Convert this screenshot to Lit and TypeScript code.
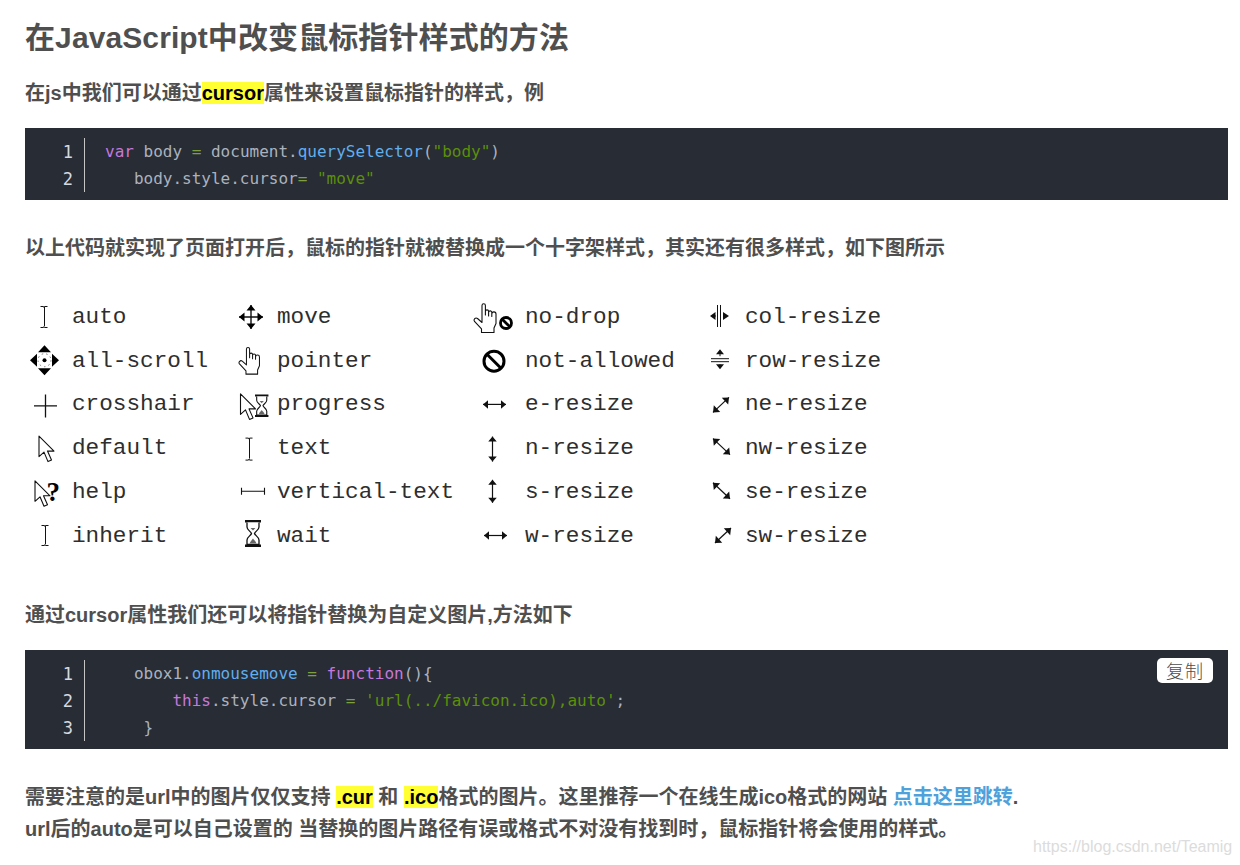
import { LitElement, html, css, svg } from "lit";
import { customElement } from "lit/decorators.js";

const ST = `#111`;
const ibeam = (x: number, a: number, b: number) => svg`<path d="M${x - 3.5} ${a}.5h3l.5 1 .5-1h3M${x}.5 ${a + 1}V${b - 1}M${x - 3.5} ${b}.5h3l.5-1 .5 1h3" fill="none" stroke=${ST} stroke-width="1"/>`;
const arrow = (x: number, y: number, s = 1) => svg`<path transform="translate(${x} ${y}) scale(${s})" d="M.5.5V21L5.5 16.5 9.5 26 13 24.5 9 15.5H15.5Z" fill="#fff" stroke=${ST} stroke-width="1.1" stroke-linejoin="round"/>`;
const hand = (x: number, y: number, s = 1) => svg`<path transform="translate(${x} ${y}) scale(${s})" d="M8 15V2.5A1.7 1.7 0 0 1 11.4 2.5V12V8.5A1.6 1.6 0 0 1 14.6 8.5V13V9.5A1.6 1.6 0 0 1 17.8 9.5V13.5V11A1.6 1.6 0 0 1 22 11V20.5L20 25V29.5H7.500V26L.5 18.5C-1 16.5 1.500 14 3.500 15.500L8 19.500Z" fill="#fff" stroke=${ST} stroke-width="1.1" stroke-linejoin="round"/>`;
const noSign = (cx: number, cy: number, r: number, w: number) => {
  const d = r * 0.7;
  return svg`<circle cx=${cx} cy=${cy} r=${r} fill="#fff" stroke="#000" stroke-width=${w}/><path d="M${cx - d} ${cy - d}L${cx + d} ${cy + d}" stroke="#000" stroke-width=${w}/>`;
};
const glass = (x: number, y: number, s = 1) => svg`<g transform="translate(${x} ${y}) scale(${s})"><path d="M0 0H16V2.500H0ZM0 24.500H16V27H0Z" fill="#111"/><path d="M2 2.500V7C2 10 6 11.500 6.500 13.500C6 15.500 2 17 2 20V24.500H14V20C14 17 10 15.500 9.500 13.500C10 11.500 14 10 14 7V2.500" fill="#fff" stroke="#111" stroke-width="1.300"/><path d="M5.500 8H10.500L8 10.500ZM4.500 23.500C5.500 21 7 20 8 18.500 9 20 10.500 21 11.500 23.500Z" fill="#666"/></g>`;
const dbl = (x1: number, y1: number, x2: number, y2: number, h = 5) => {
  const a = Math.atan2(y2 - y1, x2 - x1), c = Math.cos(a), s = Math.sin(a);
  const head = (x: number, y: number, dx: number, dy: number) =>
    `M${x} ${y}L${x - dx * h + dy * h * .85} ${y - dy * h - dx * h * .85}L${x - dx * h - dy * h * .85} ${y - dy * h + dx * h * .85}Z`;
  return svg`<path d="M${x1} ${y1}L${x2} ${y2}" stroke="#111" stroke-width="1.200"/><path d="${head(x2, y2, c, s)}${head(x1, y1, -c, -s)}" fill="#111"/>`;
};
const tri = (d: string) => svg`<path d=${d} fill="#000"/>`;

interface Cell { name: string; icon: unknown }
const cols: Cell[][] = [
  [
    { name: "auto", icon: ibeam(44, 306, 327) },
    { name: "all-scroll", icon: svg`${tri("M44.5 345L51 352H38ZM44.5 375L51 368H38ZM30 360L37 353.500V366.500ZM59 360L52 353.500V366.500Z")}<circle cx="44.500" cy="360" r="2" fill="#000"/><circle cx="44.500" cy="360" r="6.500" fill="none" stroke="#777" stroke-dasharray="1.500 3"/>` },
    { name: "crosshair", icon: svg`<path d="M34 405.500H57M45.500 394V417" stroke=${ST} stroke-width="1.300"/>` },
    { name: "default", icon: arrow(38.5, 436) },
    { name: "help", icon: svg`${arrow(34.5, 480.500)}<text x="46.500" y="501" class="q">?</text>` },
    { name: "inherit", icon: ibeam(45, 525, 545) },
  ],
  [
    { name: "move", icon: svg`<path d="M239 317H263M251 305V329" stroke="#111" stroke-width="1.400"/>${tri("M251 305L255.500 310.500H246.500ZM251 329L255.500 323.500H246.500ZM239 317L244.500 312.500V321.500ZM263 317L257.500 312.500V321.500Z")}` },
    { name: "pointer", icon: hand(239, 346.500, .93) },
    { name: "progress", icon: svg`${arrow(240, 393)}${glass(255, 394, .84)}` },
    { name: "text", icon: ibeam(249, 438, 460) },
    { name: "vertical-text", icon: svg`<path d="M241.500 488V495M264.500 488V495M241.500 491.500H264.500" stroke=${ST} stroke-width="1.100" fill="none"/>` },
    { name: "wait", icon: glass(245, 520) },
  ],
  [
    { name: "no-drop", icon: svg`${hand(474, 303)}${noSign(506, 323, 5.500, 2.800)}` },
    { name: "not-allowed", icon: noSign(494, 361, 10, 3) },
    { name: "e-resize", icon: dbl(483, 404, 506, 404) },
    { name: "n-resize", icon: dbl(492.500, 437, 492.500, 462) },
    { name: "s-resize", icon: dbl(492.500, 480, 492.500, 503) },
    { name: "w-resize", icon: dbl(484, 535.500, 507, 535.500) },
  ],
  [
    { name: "col-resize", icon: svg`<path d="M717.500 305V327M720.500 305V327" stroke="#111"/><path d="M710 316L715.500 312V320ZM729 316L723 312V320Z" fill="#111"/><path d="M712 316H716M723 316H727" stroke="#111"/>` },
    { name: "row-resize", icon: svg`<path d="M711 358.500H729M711 361.500H729M720 351V356M720 364V367" stroke="#111"/><path d="M720 349L724 354H716ZM720 369L724 364H716Z" fill="#111"/>` },
    { name: "ne-resize", icon: dbl(713, 412, 729, 397, 5.500) },
    { name: "nw-resize", icon: dbl(713, 439, 730, 455, 5.500) },
    { name: "se-resize", icon: dbl(713, 483, 730, 499, 5.500) },
    { name: "sw-resize", icon: dbl(715, 543, 731, 528, 5.500) },
  ],
];
const colX = [25, 232, 460, 705];
const iconW = [47, 45, 65, 40];
const TOP = 294, ROW = 43.8;

@customElement("app-root")
export class AppRoot extends LitElement {
  static styles = css`
    :host { display: block; position: relative; height: 865px; overflow: hidden; background: #fff; padding: 0 12px 0 25px; box-sizing: border-box;
      font-family: "Liberation Sans", "Noto Sans CJK SC", sans-serif; color: #4f4f4f; }
    h1 { margin: 17px 0 0; font-size: 30px; line-height: 42px; font-weight: 700; letter-spacing: .1px; }
    p { margin: 0; font-size: 20px; line-height: 32px; font-weight: 700; }
    .p1 { margin-top: 18px; }
    .p2 { margin-top: 32px; }
    .p3 { margin-top: 42px; }
    .p4 { margin-top: 32px; }
    mark { background: #ffff33; color: #000; }
    a { color: #4ea1db; text-decoration: none; }
    .code { position: relative; margin-top: 19px; background: #282c34; padding: 10px 0 8px; display: flex;
      font-family: "DejaVu Sans Mono", "Liberation Mono", monospace; font-size: 16px; line-height: 27px; color: #abb2bf; }
    .nums { width: 48px; padding-right: 11px; margin-right: 20px; text-align: right; border-right: 1px solid #c5c5c5; color: #d5d9e0; font-size: 17px; line-height: 27px; }
    .ln { height: 27px; padding-top: 1px; box-sizing: border-box; }
    .line { height: 27px; white-space: pre; }
    .k { color: #c678dd; } .f { color: #61aeee; } .s { color: #5c8f0a; } .o { color: #7f9f3f; }
    .copy { position: absolute; top: 8px; right: 15px; width: 56px; height: 25px; background: #fff; border-radius: 5px; display: flex; align-items: center; justify-content: center;
      font-family: "Noto Sans CJK SC", sans-serif; font-size: 18px; font-weight: 300; color: #4d4d4d; line-height: 25px; letter-spacing: 1px; }
    .grid { margin-top: 30px; height: 262.8px; display: grid; grid-template-columns: 207px 228px 245px 1fr; grid-auto-flow: column; grid-template-rows: repeat(6, 43.8px); }
    .cell { display: flex; align-items: center; }
    .cell svg { flex: none; height: 43.8px; overflow: visible; }
    .cell span { font-family: "Liberation Mono", "DejaVu Sans Mono", monospace; font-size: 22.7px; color: #2e2e2e; white-space: pre; padding-top: 2px; }
    .q { font-family: "Liberation Serif", serif; font-weight: 700; font-size: 27px; fill: #000; }
    .mark { position: absolute; left: 1033px; top: 837px; font-size: 16px; line-height: 20px; color: #dcdcdc; white-space: nowrap; }
  `;

  private grid() {
    return cols.flatMap((col, c) =>
      col.map((cell, r) => html`<div class="cell">
        <svg width=${iconW[c]} height=${ROW} viewBox="${colX[c]} ${TOP + r * ROW} ${iconW[c]} ${ROW}">${cell.icon}</svg>
        <span>${cell.name}</span>
      </div>`));
  }

  render() {
    return html`
      <h1>在JavaScript中改变鼠标指针样式的方法</h1>
      <p class="p1">在js中我们可以通过<mark>cursor</mark>属性来设置鼠标指针的样式，例</p>
      <div class="code">
        <div class="nums"><div class="ln">1</div><div class="ln">2</div></div>
        <div class="lines">
          <div class="line"><span class="k">var</span> body <span class="o">=</span> document.<span class="f">querySelector</span>(<span class="s">"body"</span>)</div>
          <div class="line">   body.style.cursor<span class="o">=</span> <span class="s">"move"</span></div>
        </div>
      </div>
      <p class="p2">以上代码就实现了页面打开后，鼠标的指针就被替换成一个十字架样式，其实还有很多样式，如下图所示</p>
      <div class="grid">${this.grid()}</div>
      <p class="p3">通过cursor属性我们还可以将指针替换为自定义图片,方法如下</p>
      <div class="code">
        <div class="nums"><div class="ln">1</div><div class="ln">2</div><div class="ln">3</div></div>
        <div class="lines">
          <div class="line">   obox1.<span class="f">onmousemove</span> <span class="o">=</span> <span class="k">function</span>(){</div>
          <div class="line">       <span class="k">this</span>.style.cursor <span class="o">=</span> <span class="s">'url(../favicon.ico),auto'</span>;</div>
          <div class="line">    }</div>
        </div>
        <div class="copy">复制</div>
      </div>
      <p class="p4">需要注意的是url中的图片仅仅支持 <mark>.cur</mark> 和 <mark>.ico</mark>格式的图片。这里推荐一个在线生成ico格式的网站 <a>点击这里跳转</a>.</p>
      <p>url后的auto是可以自己设置的 当替换的图片路径有误或格式不对没有找到时，鼠标指针将会使用的样式。</p>
      <div class="mark">https://blog.csdn.net/Teamig</div>
    `;
  }
}
